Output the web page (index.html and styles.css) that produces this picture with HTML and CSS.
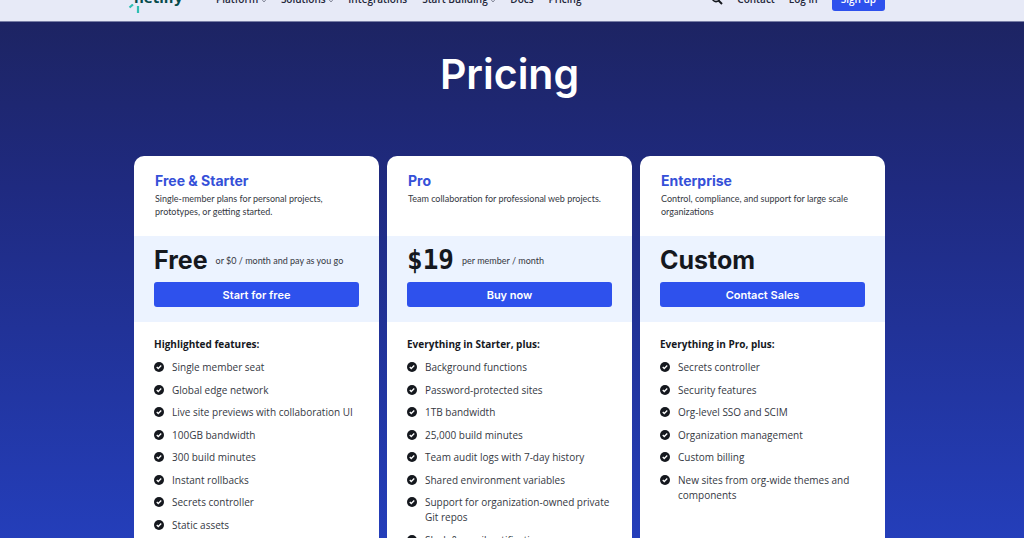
FILE: index.html
```html
<!DOCTYPE html>
<html lang="en">
<head>
    <meta charset="UTF-8">
    <meta name="viewport" content="width=device-width, initial-scale=1">
    <title>Pricing | Netlify</title>
    <link rel="stylesheet" href="styles.css">
</head>
<body>
    <!-- Icons -->
    <svg class="sprite" aria-hidden="true">
        <symbol id="check" viewBox="0 0 20 20">
            <circle cx="10" cy="10" r="10" fill="#15181e"/>
            <path d="M5.5 10l3 3 6-6" fill="none" stroke="#fff" stroke-width="2.6"/>
        </symbol>
        <symbol id="chevron" viewBox="0 0 8 8">
            <path d="M1 2.5l3 3 3-3" fill="none" stroke="#3b3f52" stroke-width="1.6"/>
        </symbol>
    </svg>

    <header class="header">
        <a href="#" class="logo">
            <span class="logo-text">netlify</span>
            <svg class="logo-rays" viewBox="0 0 16 10" aria-hidden="true">
                <path d="M1.500 3.500L5 0.500M10 2v7" fill="none" stroke="#2fbfb3" stroke-width="2.200"/>
            </svg>
        </a>
        <nav class="nav">
            <a href="#">Platform <svg class="chevron"><use href="#chevron"/></svg></a>
            <a href="#">Solutions <svg class="chevron"><use href="#chevron"/></svg></a>
            <a href="#">Integrations</a>
            <a href="#">Start Building <svg class="chevron"><use href="#chevron"/></svg></a>
            <a href="#">Docs</a>
            <a href="#">Pricing</a>
        </nav>
        <div class="account">
            <button class="search" aria-label="Search">
                <svg viewBox="0 0 12 12"><circle cx="5" cy="5" r="3.600" fill="none" stroke="#15181e" stroke-width="1.6"/><path d="M7.500 7.500l3.500 3.500" stroke="#15181e" stroke-width="2"/></svg>
            </button>
            <a href="#">Contact</a>
            <a href="#">Log in</a>
            <a href="#" class="signup">Sign up</a>
        </div>
    </header>

    <main class="pricing">
        <h1>Pricing</h1>
        <div class="plans">
            <!-- Free & Starter -->
            <section class="plan">
                <div class="plan-intro">
                    <h2>Free &amp; Starter</h2>
                    <p>Single-member plans for personal projects, prototypes, or getting started.</p>
                </div>
                <div class="plan-price">
                    <p class="price"><strong>Free</strong> <span>or $0 / month and pay as you go</span></p>
                    <button class="buy">Start for free</button>
                </div>
                <div class="plan-features">
                    <h3>Highlighted features:</h3>
                    <ul>
                        <li><svg class="check"><use href="#check"/></svg>Single member seat</li>
                        <li><svg class="check"><use href="#check"/></svg>Global edge network</li>
                        <li><svg class="check"><use href="#check"/></svg>Live site previews with collaboration UI</li>
                        <li><svg class="check"><use href="#check"/></svg>100GB bandwidth</li>
                        <li><svg class="check"><use href="#check"/></svg>300 build minutes</li>
                        <li><svg class="check"><use href="#check"/></svg>Instant rollbacks</li>
                        <li><svg class="check"><use href="#check"/></svg>Secrets controller</li>
                        <li><svg class="check"><use href="#check"/></svg>Static assets</li>
                    </ul>
                </div>
            </section>
            <!-- Pro -->
            <section class="plan">
                <div class="plan-intro">
                    <h2>Pro</h2>
                    <p>Team collaboration for professional web projects.</p>
                </div>
                <div class="plan-price">
                    <p class="price"><strong class="amount">$19</strong> <span>per member / month</span></p>
                    <button class="buy">Buy now</button>
                </div>
                <div class="plan-features">
                    <h3>Everything in Starter, plus:</h3>
                    <ul>
                        <li><svg class="check"><use href="#check"/></svg>Background functions</li>
                        <li><svg class="check"><use href="#check"/></svg>Password-protected sites</li>
                        <li><svg class="check"><use href="#check"/></svg>1TB bandwidth</li>
                        <li><svg class="check"><use href="#check"/></svg>25,000 build minutes</li>
                        <li><svg class="check"><use href="#check"/></svg>Team audit logs with 7-day history</li>
                        <li><svg class="check"><use href="#check"/></svg>Shared environment variables</li>
                        <li><svg class="check"><use href="#check"/></svg>Support for organization-owned private Git repos</li>
                        <li><svg class="check"><use href="#check"/></svg>Slack &amp; email notifications</li>
                    </ul>
                </div>
            </section>
            <!-- Enterprise -->
            <section class="plan">
                <div class="plan-intro">
                    <h2>Enterprise</h2>
                    <p>Control, compliance, and support for large scale organizations</p>
                </div>
                <div class="plan-price">
                    <p class="price"><strong>Custom</strong></p>
                    <button class="buy">Contact Sales</button>
                </div>
                <div class="plan-features">
                    <h3>Everything in Pro, plus:</h3>
                    <ul>
                        <li><svg class="check"><use href="#check"/></svg>Secrets controller</li>
                        <li><svg class="check"><use href="#check"/></svg>Security features</li>
                        <li><svg class="check"><use href="#check"/></svg>Org-level SSO and SCIM</li>
                        <li><svg class="check"><use href="#check"/></svg>Organization management</li>
                        <li><svg class="check"><use href="#check"/></svg>Custom billing</li>
                        <li><svg class="check"><use href="#check"/></svg>New sites from org-wide themes and components</li>
                    </ul>
                </div>
            </section>
        </div>
    </main>
</body>
</html>
```
FILE: styles.css
```css
* {
    box-sizing: border-box;
}
body {
    margin: 0;
    height: 100vh;
    overflow: hidden;
    display: flex;
    flex-direction: column;
    font-family: "Open Sans", sans-serif;
    color: #35383f;
}
h1, h2, h3, p, ul {
    margin: 0;
    padding: 0;
}
.sprite {
    display: none;
}
.header {
    display: flex;
    align-items: flex-end;
    flex: none;
    height: 22px;
    overflow: hidden;
    padding: 0 139px 0 128px;
    background: #e7eaf7;
    border-bottom: 1px solid #777da5;
    font-size: 10px;
    font-weight: 600;
    line-height: 14px;
}
.header a {
    color: #23273a;
    text-decoration: none;
    white-space: nowrap;
}
.header .logo {
    display: flex;
    flex-direction: column;
    width: 88px;
    padding-bottom: 7px;
}
.logo-text {
    padding-left: 6px;
    font-size: 15px;
    font-weight: 700;
    line-height: 14px;
    color: #064b4b;
}
.logo-rays {
    width: 16px;
    height: 10px;
}
.nav {
    display: flex;
    flex: 1;
    gap: 15px;
    padding-bottom: 15px;
}
.chevron {
    width: 4px;
    height: 4px;
    margin-left: 1px;
}
.account {
    display: flex;
    align-items: flex-end;
    gap: 14px;
    padding-bottom: 10px;
}
.account a {
    padding-bottom: 5px;
}
.account .signup {
    padding: 6px 9px 5px;
    border-radius: 3px;
    background: #2e51ed;
    color: white;
}
.search {
    display: flex;
    padding: 0 0 6px;
    border: none;
    background: none;
}
.search svg {
    width: 12px;
    height: 12px;
}
.pricing {
    flex: 1 0 auto;
    padding: 24px 139px 0 134px;
    background: linear-gradient(#1d2463, #1f2a80 30%, #243eba 516px);
}
h1 {
    height: 110px;
    font-family: "Inter", sans-serif;
    font-size: 41px;
    font-weight: 600;
    line-height: 56px;
    text-align: center;
    color: white;
}
.plans {
    display: grid;
    grid-template-columns: repeat(3, 1fr);
    gap: 8px;
}
.plan {
    border-radius: 10px 10px 0 0;
    overflow: hidden;
    background: white;
}
.plan-intro {
    height: 80px;
    padding: 16px 20px 0 21px;
}
.plan-intro h2 {
    font-family: "Inter", sans-serif;
    font-size: 14px;
    font-weight: 700;
    line-height: 18px;
    color: #3550d8;
}
.plan-intro p {
    padding-top: 2px;
    font-family: "Lato", sans-serif;
    font-size: 9px;
    line-height: 13px;
}
.plan-price {
    padding: 10px 20px 15px;
    background: #ecf3ff;
}
.price {
    display: flex;
    align-items: center;
    gap: 8px;
    height: 28px;
    margin-bottom: 8px;
    font-family: "Lato", sans-serif;
    font-size: 9px;
}
.price strong {
    font-family: "Inter", sans-serif;
    font-size: 25px;
    font-weight: 700;
    line-height: 28px;
    color: #15181e;
}
.price .amount {
    font-family: "DejaVu Sans Mono", monospace;
    font-size: 26px;
}
.buy {
    display: block;
    width: 100%;
    height: 25px;
    border: none;
    border-radius: 3px;
    background: #2e51ed;
    color: white;
    font-family: "Inter", sans-serif;
    font-size: 11px;
    font-weight: 600;
    cursor: pointer;
}
.plan-features {
    padding: 15px 20px 20px;
}
.plan-features h3 {
    margin-bottom: 8px;
    font-size: 10px;
    font-weight: 700;
    line-height: 15px;
    color: #15181e;
}
.plan-features ul {
    list-style: none;
}
.plan-features li {
    display: flex;
    gap: 8px;
    margin-bottom: 8px;
    font-size: 10px;
    line-height: 15px;
}
.plan-features li:nth-child(even) {
    margin-bottom: 7px;
}
.check {
    flex: none;
    width: 10px;
    height: 10px;
    margin-top: 2px;
}
```
